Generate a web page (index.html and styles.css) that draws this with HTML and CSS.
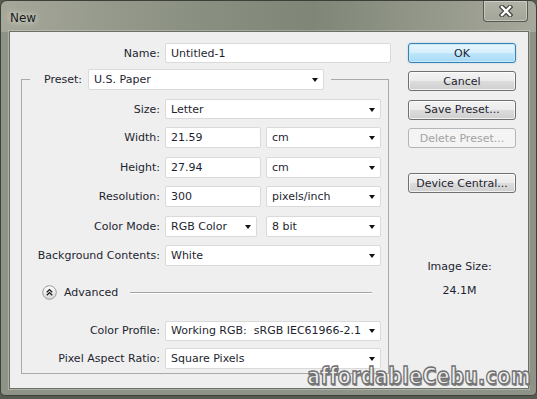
FILE: index.html
```html
<!DOCTYPE html>
<html lang="en">
<head>
    <meta charset="UTF-8">
    <meta name="viewport" content="width=device-width, initial-scale=1.0">
    <title>New</title>
    <link rel="stylesheet" href="styles.css">
</head>
<body>

    <div class="window">
        <!-- Title bar -->
        <div class="titlebar">
            <span class="title">New</span>
            <button class="close-btn" aria-label="Close">
                <svg width="14" height="12" viewBox="0 0 14 12">
                    <path d="M3 2 L11 10 M11 2 L3 10" stroke="#3b3e37" stroke-width="4.6" stroke-linecap="square" fill="none"/>
                    <path d="M3 2 L11 10 M11 2 L3 10" stroke="#ffffff" stroke-width="2.4" stroke-linecap="square" fill="none"/>
                </svg>
            </button>
        </div>

        <div class="panel">
            <!-- Form -->
            <div class="form">
                <div class="row">
                    <label class="label name-label">Name:</label>
                    <div class="field name-field">Untitled-1</div>
                </div>

                <fieldset class="preset-box">
                    <legend class="preset">
                        <label class="preset-label">Preset:</label>
                        <div class="select preset-select">U.S. Paper</div>
                    </legend>

                    <div class="rows">
                        <div class="row">
                            <label class="label">Size:</label>
                            <div class="select full">Letter</div>
                        </div>
                        <div class="row">
                            <label class="label">Width:</label>
                            <div class="field num">21.59</div>
                            <div class="select unit">cm</div>
                        </div>
                        <div class="row">
                            <label class="label">Height:</label>
                            <div class="field num">27.94</div>
                            <div class="select unit">cm</div>
                        </div>
                        <div class="row">
                            <label class="label">Resolution:</label>
                            <div class="field num">300</div>
                            <div class="select unit">pixels/inch</div>
                        </div>
                        <div class="row">
                            <label class="label">Color Mode:</label>
                            <div class="select mode">RGB Color</div>
                            <div class="select unit">8 bit</div>
                        </div>
                        <div class="row">
                            <label class="label">Background Contents:</label>
                            <div class="select full">White</div>
                        </div>
                    </div>

                    <!-- Advanced -->
                    <div class="advanced">
                        <svg class="adv-icon" width="15" height="15" viewBox="0 0 15 15">
                            <defs>
                                <linearGradient id="advFill" x1="0" y1="0" x2="0" y2="1">
                                    <stop offset="0" stop-color="#ffffff"/>
                                    <stop offset="1" stop-color="#d6d6d6"/>
                                </linearGradient>
                            </defs>
                            <circle cx="7.5" cy="7.5" r="6.8" fill="url(#advFill)" stroke="#9a9a9a" stroke-width="1"/>
                            <path d="M4.8 7.2 L7.5 4.6 L10.2 7.2 M4.8 10.2 L7.5 7.6 L10.2 10.2" stroke="#1a1a1a" stroke-width="1.3" fill="none"/>
                        </svg>
                        <span class="adv-text">Advanced</span>
                        <span class="adv-line"></span>
                    </div>

                    <div class="rows tight">
                        <div class="row">
                            <label class="label">Color Profile:</label>
                            <div class="select full">Working RGB:&nbsp; sRGB IEC61966-2.1</div>
                        </div>
                        <div class="row">
                            <label class="label">Pixel Aspect Ratio:</label>
                            <div class="select full">Square Pixels</div>
                        </div>
                    </div>
                </fieldset>
            </div>

            <!-- Buttons -->
            <div class="side">
                <button class="btn ok">OK</button>
                <button class="btn">Cancel</button>
                <button class="btn">Save Preset...</button>
                <button class="btn disabled">Delete Preset...</button>
                <button class="btn device">Device Central...</button>

                <div class="image-size">Image Size:</div>
                <div class="image-size value">24.1M</div>
            </div>
        </div>

        <div class="watermark">affordableCebu.com</div>
    </div>

</body>
</html>
```

FILE: styles.css
```css
/* Basic Reset */
* {
    box-sizing: border-box;
    margin: 0;
    padding: 0;
}

body {
    width: 537px;
    height: 399px;
    overflow: hidden;
    background: #575a52;
    font-family: 'DejaVu Sans', Verdana, sans-serif;
    font-size: 11px;
    color: #1e1f30;
}

/* Window frame */
.window {
    position: relative;
    height: 396px;
    border: 1px solid #3d4038;
    border-radius: 7px 7px 5px 5px;
    padding: 0 7px 6px 8px;
    background:
        linear-gradient(to right, #a5a799, #8a9082 35%, #7f8677 58%, #a6a89b) top / 100% 31px no-repeat,
        #8e9387;
    display: flex;
    flex-direction: column;
}

.titlebar {
    height: 30px;
    display: flex;
    justify-content: space-between;
    align-items: flex-start;
    padding-left: 1px;
}

.title {
    margin-top: 10px;
    font-size: 12px;
    color: #1b1b1b;
    text-shadow: 0 0 6px rgba(235, 235, 225, 0.9), 0 0 10px rgba(235, 235, 225, 0.6);
}

.close-btn {
    width: 45px;
    height: 21px;
    margin-right: 1px;
    border: 1px solid #555950;
    border-top: none;
    border-radius: 0 0 4px 4px;
    background: linear-gradient(#b1b3a7, #a2a598);
    box-shadow: inset 0 0 0 1px rgba(255, 255, 255, 0.35);
    display: flex;
    justify-content: center;
    align-items: center;
}

/* Dialog body */
.panel {
    flex: 1;
    display: flex;
    border: 1px solid #6c7066;
    box-shadow: 0 0 0 1px rgba(255, 255, 255, 0.25);
    background: #efefef;
    padding-top: 11px;
}

.form {
    width: 381px;
}

.row {
    display: flex;
    align-items: center;
    gap: 5px;
    height: 21px;
}

.row:first-child {
    height: 20px;
}

.label {
    width: 138px;
    text-align: right;
    white-space: nowrap;
}

.name-label {
    width: 150px;
}

.field,
.select {
    height: 100%;
    background: #fff;
    border: 1px solid #dadada;
    border-radius: 2px;
    padding: 0 5px;
    display: flex;
    align-items: center;
    white-space: nowrap;
}

.select {
    justify-content: space-between;
}

.select::after {
    content: '';
    border-left: 3.5px solid transparent;
    border-right: 3.5px solid transparent;
    border-top: 4px solid #111;
    margin-top: 1px;
}

.name-field { width: 226px; }
.full { width: 216px; }
.num { width: 96px; }
.unit { width: 115px; }
.mode { width: 92px; margin-right: 4px; }

/* Preset group */
.preset-box {
    margin: 6px 0 0 11px;
    width: 368px;
    border: 1px solid #a9a9a9;
    padding: 0 0 4px 0;
    min-width: 0;
}

.preset {
    margin-left: 8px;
    padding: 0 7px 0 14px;
    display: flex;
    align-items: center;
    gap: 5px;
    height: 21px;
}

.preset-label {
    width: 39px;
}

.preset-select {
    width: 236px;
}

.rows {
    display: flex;
    flex-direction: column;
    gap: 8.4px;
    padding-top: 9px;
}

.rows.tight {
    gap: 7px;
    padding-top: 0;
}

.advanced {
    display: flex;
    align-items: center;
    gap: 7px;
    height: 16px;
    margin: 19px 16px 20px 20px;
}

.adv-line {
    flex: 1;
    height: 1px;
    margin-left: 5px;
    background: #a4a4a4;
    box-shadow: 0 1px 0 #fff;
}

/* Side buttons */
.side {
    width: 108px;
    margin-left: 17px;
    display: flex;
    flex-direction: column;
    gap: 8.4px;
}

.btn {
    height: 20px;
    font-family: inherit;
    font-size: 11px;
    color: #1e1f30;
    border: 1px solid #707070;
    border-radius: 3px;
    background: linear-gradient(#f3f3f3 0%, #ebebeb 48%, #dcdcdc 52%, #cfcfcf 100%);
    box-shadow: inset 0 0 0 1px rgba(255, 255, 255, 0.7);
}

.btn.ok {
    border-color: #3c7fb1;
    background: linear-gradient(#e8f6fd 0%, #d5effc 48%, #bde5fb 52%, #a9daf5 100%);
    box-shadow: inset 0 0 0 1px #c4eafc, 0 0 2px rgba(80, 180, 230, 0.5);
}

.btn.disabled {
    color: #a3a3a3;
    border-color: #b3b6b8;
    background: #f4f4f4;
    box-shadow: none;
}

.btn.device {
    margin-top: 16.6px;
}

.image-size {
    text-align: center;
    line-height: 14px;
    padding-right: 5px;
    margin-top: 58px;
}

.image-size.value {
    margin-top: 1.6px;
}

/* Watermark overlay */
.watermark {
    position: absolute;
    right: 5px;
    bottom: 7px;
    font-family: 'DejaVu Sans', sans-serif;
    font-weight: bold;
    font-size: 19px;
    line-height: 1;
    letter-spacing: 0.4px;
    color: #eeeeee;
    -webkit-text-stroke: 1.2px #707070;
    text-shadow: 1px 1px 0 #8a8a8a;
    transform: scaleY(1.25);
    transform-origin: bottom right;
}
```
